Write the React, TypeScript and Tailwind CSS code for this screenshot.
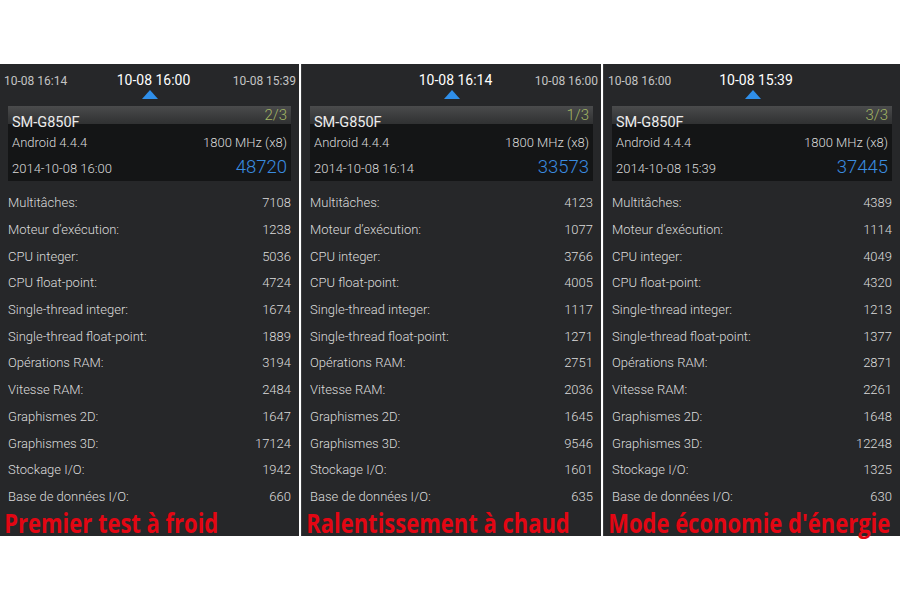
import React from "react";

type Panel = {
  left?: string;
  center: string;
  right?: string;
  rank: string;
  date: string;
  score: string;
  values: string[];
  caption: string;
  width: string;
};

const labels = [
  "Multitâches:",
  "Moteur d\u2019exécution:",
  "CPU integer:",
  "CPU float-point:",
  "Single-thread integer:",
  "Single-thread float-point:",
  "Opérations RAM:",
  "Vitesse RAM:",
  "Graphismes 2D:",
  "Graphismes 3D:",
  "Stockage I/O:",
  "Base de données I/O:",
];

const panels: Panel[] = [
  {
    left: "10-08 16:14",
    center: "10-08 16:00",
    right: "10-08 15:39",
    rank: "2/3",
    date: "2014-10-08 16:00",
    score: "48720",
    values: ["7108", "1238", "5036", "4724", "1674", "1889", "3194", "2484", "1647", "17124", "1942", "660"],
    caption: "Premier test à froid",
    width: "w-[299px]",
  },
  {
    center: "10-08 16:14",
    right: "10-08 16:00",
    rank: "1/3",
    date: "2014-10-08 16:14",
    score: "33573",
    values: ["4123", "1077", "3766", "4005", "1117", "1271", "2751", "2036", "1645", "9546", "1601", "635"],
    caption: "Ralentissement à chaud",
    width: "w-[300px]",
  },
  {
    left: "10-08 16:00",
    center: "10-08 15:39",
    rank: "3/3",
    date: "2014-10-08 15:39",
    score: "37445",
    values: ["4389", "1114", "4049", "4320", "1213", "1377", "2871", "2261", "1648", "12248", "1325", "630"],
    caption: "Mode économie d'énergie",
    width: "w-[297px]",
  },
];

function PanelView({ p, edge }: { p: Panel; edge: boolean }) {
  return (
    <div
      className={`${p.width} h-[472px] bg-[#262729] flex flex-col ${edge ? "border-l border-[#3a3b3d]" : ""}`}
      style={{ fontFamily: "Roboto, 'Noto Sans', sans-serif" }}
    >
      {/* header */}
      <div className="h-[43px] flex flex-col">
        <div className="flex items-end h-[25px] pb-[2px]">
          <div className="w-[90px] pl-[4px] text-[12px] text-[#c4c4c4] leading-none">{p.left ?? ""}</div>
          <div className="flex-1 text-center pl-[8px] text-[14px] text-white leading-none">{p.center}</div>
          <div className="w-[90px] pr-[3px] text-right text-[12px] text-[#c4c4c4] leading-none">{p.right ?? ""}</div>
        </div>
        <div className="flex justify-center pt-[1px] pl-[1px]">
          <svg width="16" height="9" viewBox="0 0 16 9">
            <polygon points="8,0 16,9 0,9" fill="#2f8fea" />
          </svg>
        </div>
      </div>
      {/* card */}
      <div className="mx-[8px] h-[76px] bg-[#141516] flex flex-col relative font-light">
        <div className="absolute left-0 right-0 top-0 h-[18px] bg-gradient-to-b from-[#4a4b4c] to-[#303132]" />
        <div className="relative flex justify-between items-start px-[4px] pt-[2px]">
          <span className="text-[14.5px] text-[#ececec] mt-[8px] leading-none font-normal">SM-G850F</span>
          <span className="text-[15px] text-[#a4b865] leading-none pr-[0px]">{p.rank}</span>
        </div>
        <div className="relative flex justify-between px-[4px] mt-[5px] text-[13px] text-[#dadada] leading-none">
          <span>Android 4.4.4</span>
          <span>1800 MHz (x8)</span>
        </div>
        <div className="relative flex justify-between items-end px-[4px] mt-[9px] leading-none">
          <span className="text-[13px] text-[#dadada] pb-[1px]">{p.date}</span>
          <span className="text-[18.5px] text-[#3a8ce0]">{p.score}</span>
        </div>
      </div>
      {/* rows */}
      <div className="flex flex-col mt-[9px] px-[8px] font-light">
        {labels.map((l, i) => (
          <div key={l} className="h-[26.7px] flex items-center justify-between text-[13px] text-[#dcdcdc]">
            <span>{l}</span>
            <span>{p.values[i]}</span>
          </div>
        ))}
      </div>
      <div
        className="pl-[5px] h-[26px] text-[26px] font-bold text-[#e30613] leading-[26px] whitespace-nowrap origin-left scale-x-[0.845]"
        style={{ fontFamily: "'Open Sans', sans-serif" }}
      >
        {p.caption}
      </div>
    </div>
  );
}

export default function App() {
  return (
    <div className="w-[900px] h-[600px] bg-white pt-[64px]">
      <div className="flex gap-[2px]">
        {panels.map((p, i) => (
          <PanelView key={i} p={p} edge={i > 0} />
        ))}
      </div>
    </div>
  );
}
